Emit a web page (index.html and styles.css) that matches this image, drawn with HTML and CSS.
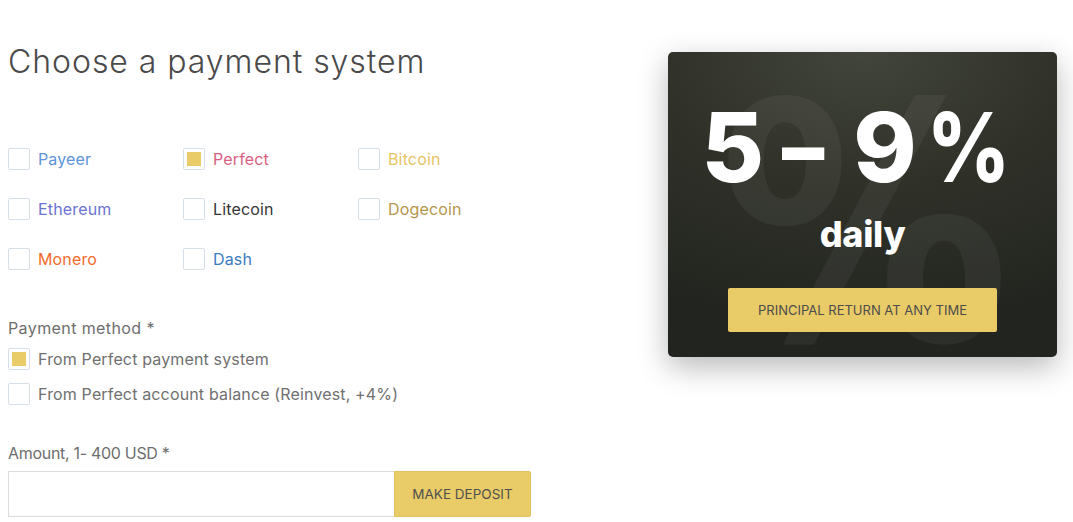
FILE: index.html
```html
<!DOCTYPE html>
<html lang="en">
<head>
<meta charset="utf-8">
<title>Choose a payment system</title>
<link rel="stylesheet" href="styles.css">
</head>
<body>
<div class="page">
  <form class="deposit">
    <h1 class="title">Choose a payment system</h1>
    <div class="systems">
      <label class="opt"><span class="box"></span><span class="name c-payeer">Payeer</span></label>
      <label class="opt"><span class="box on"></span><span class="name c-perfect">Perfect</span></label>
      <label class="opt"><span class="box"></span><span class="name c-bitcoin">Bitcoin</span></label>
      <label class="opt"><span class="box"></span><span class="name c-eth">Ethereum</span></label>
      <label class="opt"><span class="box"></span><span class="name c-ltc">Litecoin</span></label>
      <label class="opt"><span class="box"></span><span class="name c-doge">Dogecoin</span></label>
      <label class="opt"><span class="box"></span><span class="name c-xmr">Monero</span></label>
      <label class="opt"><span class="box"></span><span class="name c-dash">Dash</span></label>
    </div>
    <div class="field-label method-label">Payment method *</div>
    <div class="methods">
      <label class="opt"><span class="box on"></span><span class="name c-muted">From Perfect payment system</span></label>
      <label class="opt"><span class="box"></span><span class="name c-muted">From Perfect account balance (Reinvest, +4%)</span></label>
    </div>
    <div class="field-label amount-label">Amount, 1- 400 USD *</div>
    <div class="amount-row">
      <input class="amount" type="text" aria-label="Amount">
      <button class="btn deposit-btn" type="button">MAKE DEPOSIT</button>
    </div>
  </form>
  <aside class="promo">
    <div class="watermark" aria-hidden="true">%</div>
    <div class="rate"><span class="r-num">5</span><span class="r-dash">–</span><span class="r-num r-nine">9</span><span class="r-pct">%</span></div>
    <div class="daily">daily</div>
    <div class="btn promo-btn">PRINCIPAL RETURN AT ANY TIME</div>
  </aside>
</div>
</body>
</html>
```
FILE: styles.css
```css
* { box-sizing: border-box; }
html, body { margin: 0; padding: 0; background: #fff; }
body {
  font-family: "Inter", "Open Sans", "Liberation Sans", sans-serif;
  color: #555;
  width: 1073px;
  height: 522px;
  overflow: hidden;
}
.page {
  display: flex;
  justify-content: space-between;
  align-items: flex-start;
  padding: 0 16px 0 8px;
}
.deposit { width: 524px; }
.title {
  margin: 42px 0 0;
  font-size: 32px;
  line-height: 40px;
  font-weight: 300;
  color: #4a4a4a;
  letter-spacing: 0.95px;
}
.systems {
  margin-top: 66px;
  display: grid;
  grid-template-columns: 175px 175px 175px;
  row-gap: 28px;
}
.opt {
  display: flex;
  align-items: center;
  height: 22px;
  gap: 8px;
  font-size: 16px;
  cursor: pointer;
}
.box {
  flex: none;
  width: 22px;
  height: 22px;
  border: 1px solid #d6dee7;
  border-radius: 2px;
  background: #fff;
  padding: 3px;
}
.box.on::after {
  content: "";
  display: block;
  width: 14px;
  height: 14px;
  background: #e9cb67;
}
.name { white-space: nowrap; letter-spacing: 0.15px; }
.c-payeer { color: #5e93d8; }
.c-perfect { color: #d8607f; }
.c-bitcoin { color: #e7c464; }
.c-eth { color: #6a73d4; }
.c-ltc { color: #353535; }
.c-doge { color: #b5964b; }
.c-xmr { color: #f26b2d; }
.c-dash { color: #3c7cc1; }
.c-muted { color: #707070; }
.field-label {
  font-size: 16px;
  line-height: 22px;
  color: #6e6e6e;
}
.method-label { margin-top: 47px; letter-spacing: 0.4px; }
.methods {
  margin-top: 9px;
  display: flex;
  flex-direction: column;
  gap: 13px;
}
.amount-label { margin-top: 37px; letter-spacing: -0.3px; }
.amount-row {
  margin-top: 7px;
  display: flex;
  height: 46px;
  width: 524px;
}
.amount {
  width: 386px;
  height: 46px;
  border: 1px solid #dcdcdc;
  border-right: none;
  outline: none;
  padding: 0 12px;
  font: inherit;
}
.btn {
  background: #e9cb67;
  color: #505050;
  font-family: inherit;
  font-size: 13.5px;
  text-transform: uppercase;
  border: none;
}
.deposit-btn {
  width: 137px;
  height: 46px;
  border-radius: 0 3px 3px 0;
  padding: 0;
  box-shadow: inset 0 0 0 1px #e2c35e;
}
.promo {
  position: relative;
  overflow: hidden;
  width: 389px;
  height: 305px;
  margin-top: 52px;
  border-radius: 5px;
  background: radial-gradient(ellipse 110% 90% at 50% 0%, #42453c 0%, #2f3129 50%, #22241f 100%);
  box-shadow: 0 10px 30px rgba(0, 0, 0, 0.28);
  display: flex;
  flex-direction: column;
  align-items: center;
}
.watermark {
  position: absolute;
  left: 0;
  right: 0;
  top: 9px;
  text-align: center;
  font-family: "DejaVu Sans", sans-serif;
  font-size: 330px;
  line-height: 1;
  font-weight: 700;
  color: rgba(255, 255, 255, 0.05);
  transform: translateX(2px) scaleX(0.88);
  pointer-events: none;
}
.rate {
  position: relative;
  margin-top: 47px;
  display: flex;
  align-items: baseline;
  font-size: 96px;
  line-height: 96px;
  font-weight: 800;
  color: #fff;
  white-space: nowrap;
  padding-right: 6px;
}
.r-dash {
  display: inline-block;
  transform: scaleX(0.88);
  margin-left: 15px;
}
.r-nine { margin-left: 26px; }
.r-pct {
  display: inline-block;
  margin-left: 2px;
  transform: scaleX(0.84);
}
.daily {
  position: relative;
  margin-top: 17px;
  font-size: 36px;
  line-height: 44px;
  font-weight: 800;
  color: #fff;
  letter-spacing: -0.3px;
}
.promo-btn {
  position: relative;
  margin-top: 32px;
  width: 269px;
  height: 44px;
  border-radius: 2px;
  display: flex;
  align-items: center;
  justify-content: center;
  font-size: 13px;
  color: #4d4d4d;
}
```
